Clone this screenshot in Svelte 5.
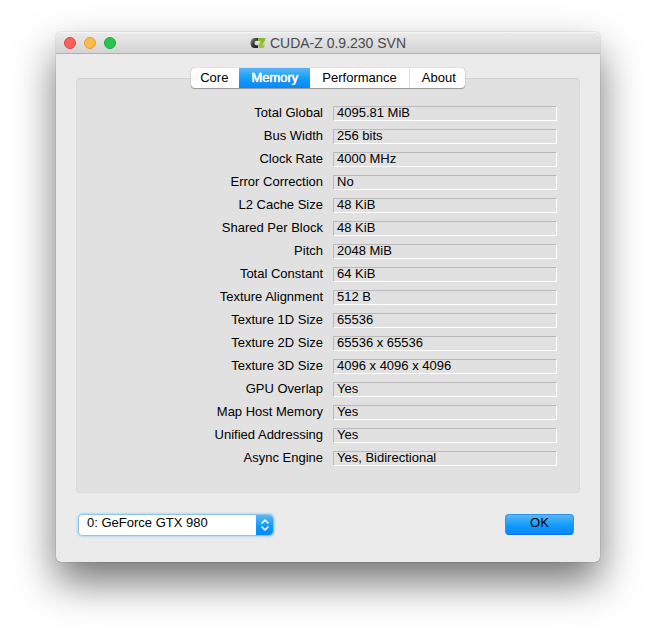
<script>
  const tabs = ["Core", "Memory", "Performance", "About"];
  let activeTab = "Memory";
  let device = "0";

  const devices = [
    { id: "0", name: "0: GeForce GTX 980" }
  ];

  const memory = [
    ["Total Global", "4095.81 MiB"],
    ["Bus Width", "256 bits"],
    ["Clock Rate", "4000 MHz"],
    ["Error Correction", "No"],
    ["L2 Cache Size", "48 KiB"],
    ["Shared Per Block", "48 KiB"],
    ["Pitch", "2048 MiB"],
    ["Total Constant", "64 KiB"],
    ["Texture Alignment", "512 B"],
    ["Texture 1D Size", "65536"],
    ["Texture 2D Size", "65536 x 65536"],
    ["Texture 3D Size", "4096 x 4096 x 4096"],
    ["GPU Overlap", "Yes"],
    ["Map Host Memory", "Yes"],
    ["Unified Addressing", "Yes"],
    ["Async Engine", "Yes, Bidirectional"]
  ];
</script>

<main class="window">
  <header class="titlebar">
    <div class="lights">
      <button class="light close" type="button" aria-label="Close"></button>
      <button class="light minimize" type="button" aria-label="Minimize"></button>
      <button class="light zoom" type="button" aria-label="Zoom"></button>
    </div>
    <h1 class="title">
      <svg class="logo" viewBox="0 0 16 12" width="16" height="12" aria-hidden="true">
        <defs>
          <linearGradient id="dark" x1="0" y1="0" x2="1" y2="1">
            <stop offset="0" stop-color="#a0a0a0" />
            <stop offset="0.5" stop-color="#383838" />
            <stop offset="1" stop-color="#222" />
          </linearGradient>
          <linearGradient id="green" x1="0" y1="0" x2="0" y2="1">
            <stop offset="0" stop-color="#86b52a" />
            <stop offset="1" stop-color="#9ccc3c" />
          </linearGradient>
        </defs>
        <path d="M8 1H4.500C2 1 0.500 3 0.500 6s1.500 5 4 5H8V8.200H6.200C5 8.200 4.600 7.200 4.600 6s0.400-2.200 1.600-2.200H8z" fill="url(#dark)" />
        <path d="M8 1h7.500L15 3.500 12.500 8H14.500l-0.500 3H8.500V8L10.800 4H8z" fill="url(#green)" />
        <path d="M12.500 8L15.200 3v5z" fill="#c8dea0" />
      </svg>
      CUDA-Z 0.9.230 SVN
    </h1>
  </header>

  <div class="content">
    <div class="tabs" role="tablist">
      {#each tabs as tab}
        <button
          class="tab"
          class:active={activeTab === tab}
          type="button"
          role="tab"
          aria-selected={activeTab === tab}
          on:click={() => activeTab = tab}
        >{tab}</button>
      {/each}
    </div>

    <section class="panel" role="tabpanel" aria-label={activeTab}>
      {#if activeTab === "Memory"}
        <dl>
          {#each memory as [label, value]}
            <div class="row">
              <dt>{label}</dt>
              <dd>{value}</dd>
            </div>
          {/each}
        </dl>
      {/if}
    </section>

    <footer class="actions">
      <div class="picker">
        <select aria-label="Device" bind:value={device}>
          {#each devices as d}
            <option value={d.id}>{d.name}</option>
          {/each}
        </select>
        <span class="stepper">
          <svg viewBox="0 0 10 14" width="10" height="14" aria-hidden="true">
            <path d="M2 5l3-3 3 3M2 9l3 3 3-3" fill="none" stroke="#fff" stroke-width="1.600" stroke-linecap="round" stroke-linejoin="round" />
          </svg>
        </span>
      </div>
      <button class="ok" type="button">OK</button>
    </footer>
  </div>
</main>

<style>
  :global(body) {
    background: #fff;
    font-family: "Liberation Sans", Helvetica, Arial, sans-serif;
    font-size: 13px;
    line-height: 15px;
    color: #000;
  }

  button,
  select {
    font: inherit;
    color: inherit;
    margin: 0;
  }

  .window {
    margin: 32px 56px 80px;
    background: #ebebeb;
    border-radius: 5px;
    box-shadow:
      0 0 1px rgba(0, 0, 0, 0.6),
      0 20px 40px rgba(0, 0, 0, 0.55);
  }

  .titlebar {
    position: relative;
    display: flex;
    align-items: center;
    justify-content: center;
    height: 21px;
    border-bottom: 1px solid #b1b1b1;
    border-radius: 5px 5px 0 0;
    background: linear-gradient(#ebebeb, #d3d3d3);
    box-shadow: inset 0 1px 0 #f6f6f6;
  }

  .lights {
    position: absolute;
    left: 8px;
    display: flex;
    gap: 8px;
  }

  .light {
    width: 12px;
    height: 12px;
    padding: 0;
    border: 1px solid;
    border-radius: 50%;
  }

  .close {
    background: #fc605b;
    border-color: #e0443e;
  }

  .minimize {
    background: #fdb94a;
    border-color: #dfa03a;
  }

  .zoom {
    background: #27c550;
    border-color: #1faa3c;
  }

  .title {
    display: flex;
    align-items: center;
    gap: 4px;
    margin: 0;
    padding-top: 1px;
    font-size: 14px;
    font-weight: normal;
    color: #4a4a4a;
  }

  .content {
    padding: 14px 20px 27px;
  }

  .tabs {
    position: relative;
    display: flex;
    width: max-content;
    margin: 0 auto -10px;
    border-radius: 4px;
    background: #fff;
    box-shadow: 0 0 1px rgba(0, 0, 0, 0.4), 0 1px 1px rgba(0, 0, 0, 0.3);
    overflow: hidden;
  }

  .tab {
    height: 20px;
    padding: 0 12px 2px;
    border: 0;
    background: none;
  }

  .tab:first-child {
    padding-left: 9px;
    padding-right: 11px;
  }

  .tab:last-child {
    padding-right: 9px;
    border-left: 1px solid #e0e0e0;
  }

  .tab.active {
    color: #fff;
    background: linear-gradient(#5eb5f6, #0f9cfb 55%, #0a87fb);
    text-shadow: 0 0 1px #fff, 0 1px 1px rgba(0, 60, 140, 0.5);
    -webkit-text-stroke: 0.3px #fff;
  }

  .panel {
    padding: 27px 22px 26px;
    border: 1px solid #dbdbdb;
    border-top-color: #d0d0d0;
    border-radius: 4px;
    background: #e1e1e1;
  }

  dl {
    display: grid;
    gap: 8px;
    margin: 0;
  }

  .row {
    display: grid;
    grid-template-columns: 1fr 1fr;
    gap: 10px;
  }

  dt,
  dd {
    margin: 0;
    height: 15px;
    line-height: 13px;
    white-space: nowrap;
  }

  dt {
    text-align: right;
  }

  dd {
    box-sizing: border-box;
    padding-left: 3px;
    border: 1px solid;
    border-color: #b9b9b9 #fff #fff #b9b9b9;
    line-height: 11px;
  }

  .actions {
    display: flex;
    justify-content: space-between;
    align-items: center;
    padding: 21px 6px 0 3px;
  }

  .picker {
    position: relative;
    display: flex;
    width: 194px;
    border-radius: 4px;
    box-shadow: 0 0 0 1px #8fc3e8, 0 0 2px 2px #b4d9f2;
  }

  .picker select {
    appearance: none;
    width: 100%;
    height: 20px;
    padding: 0 24px 4px 8px;
    border: 0;
    border-radius: 4px;
    background: #fff;
    outline: none;
  }

  .stepper {
    position: absolute;
    top: 0;
    right: 0;
    bottom: 0;
    display: flex;
    align-items: center;
    justify-content: center;
    width: 17px;
    border-radius: 0 4px 4px 0;
    background: linear-gradient(#5eb5f6, #0f9cfb 55%, #0a87fb);
    pointer-events: none;
  }

  .ok {
    width: 69px;
    height: 21px;
    padding: 0 0 4px;
    border: 1px solid #2a93ea;
    border-bottom-color: #0a6fe8;
    border-radius: 4px;
    background: linear-gradient(#5eb5f6, #0f9cfb 55%, #0a87fb);
  }
</style>
